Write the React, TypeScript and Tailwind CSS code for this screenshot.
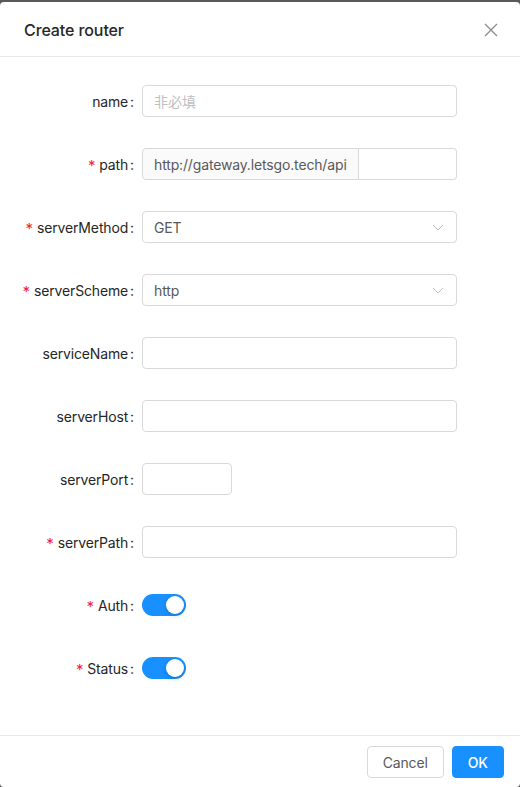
import React from "react";

const font = { fontFamily: 'Inter, "Noto Sans CJK SC", sans-serif' };

function Label({ text, required }: { text: string; required?: boolean }) {
  return (
    <div className="flex w-[118px] shrink-0 items-center justify-end text-[14px] tracking-[-0.15px] text-[#262626]">
      {required && <span className="mr-1 mt-[2px] text-[15px] leading-none text-[#f5222d]">*</span>}
      <span>{text}</span>
      <span className="ml-[2px] mr-2">:</span>
    </div>
  );
}

function Row({ children }: { children: React.ReactNode }) {
  return <div className="mb-[23px] flex h-10 items-center">{children}</div>;
}

function TextInput({ placeholder, className = "w-[315px]" }: { placeholder?: string; className?: string }) {
  return (
    <div className={`flex h-8 items-center rounded border border-[#d9d9d9] bg-white px-[11px] text-[14px] text-[#bfbfbf] ${className}`}>
      {placeholder}
    </div>
  );
}

function Select({ value }: { value: string }) {
  return (
    <div className="flex h-8 w-[315px] items-center justify-between rounded border border-[#d9d9d9] bg-white pl-[11px] pr-[12px] text-[14px] tracking-[-0.15px] text-[#595959]">
      <span>{value}</span>
      <svg width="12" height="12" viewBox="0 0 12 12" fill="none" stroke="#bfbfbf" strokeWidth="1">
        <path d="M1 4l5 5 5-5" />
      </svg>
    </div>
  );
}

function Switch() {
  return (
    <div className="relative h-[22px] w-11 rounded-full bg-[#1890ff]">
      <div className="absolute left-6 top-[2px] h-[18px] w-[18px] rounded-full bg-white shadow-[0_2px_4px_0_rgba(0,35,11,0.2)]" />
    </div>
  );
}

export default function App() {
  return (
    <div className="h-[787px] w-[520px] overflow-hidden bg-[#595959] pt-[2px]" style={font}>
      <div className="flex h-[785px] flex-col rounded bg-white">
        <div className="flex h-[55px] shrink-0 items-center justify-between border-b border-[#e8e8e8] px-6 pt-[2px]">
          <span className="text-[16px] font-medium tracking-[-0.1px] text-[#262626]">Create router</span>
          <svg width="14" height="14" viewBox="0 0 14 14" stroke="#8c8c8c" strokeWidth="1.3" className="mr-[-2px]">
            <path d="M1 1l12 12M13 1L1 13" />
          </svg>
        </div>
        <div className="flex-1 px-6 pb-6 pt-6">
          <Row>
            <Label text="name" />
            <TextInput placeholder="非必填" />
          </Row>
          <Row>
            <Label text="path" required />
            <div className="flex h-8 w-[315px] text-[14px] tracking-[-0.15px]">
              <div className="flex items-center rounded-l border border-[#d9d9d9] bg-[#fafafa] px-[11px] text-[#595959]">
                http://gateway.letsgo.tech/api
              </div>
              <div className="flex-1 rounded-r border border-l-0 border-[#d9d9d9] bg-white" />
            </div>
          </Row>
          <Row>
            <Label text="serverMethod" required />
            <Select value="GET" />
          </Row>
          <Row>
            <Label text="serverScheme" required />
            <Select value="http" />
          </Row>
          <Row>
            <Label text="serviceName" />
            <TextInput />
          </Row>
          <Row>
            <Label text="serverHost" />
            <TextInput />
          </Row>
          <Row>
            <Label text="serverPort" />
            <TextInput className="w-[90px]" />
          </Row>
          <Row>
            <Label text="serverPath" required />
            <TextInput />
          </Row>
          <Row>
            <Label text="Auth" required />
            <Switch />
          </Row>
          <Row>
            <Label text="Status" required />
            <Switch />
          </Row>
        </div>
        <div className="flex shrink-0 justify-end gap-2 border-t border-[#e8e8e8] px-4 pb-[9px] pt-[10px]">
          <button className="h-8 rounded border border-[#d9d9d9] bg-white px-[15px] text-[14px] tracking-[-0.15px] text-[#595959]">
            Cancel
          </button>
          <button className="h-8 rounded border border-[#1890ff] bg-[#1890ff] px-[15px] text-[14px] font-medium text-white">
            OK
          </button>
        </div>
      </div>
    </div>
  );
}
